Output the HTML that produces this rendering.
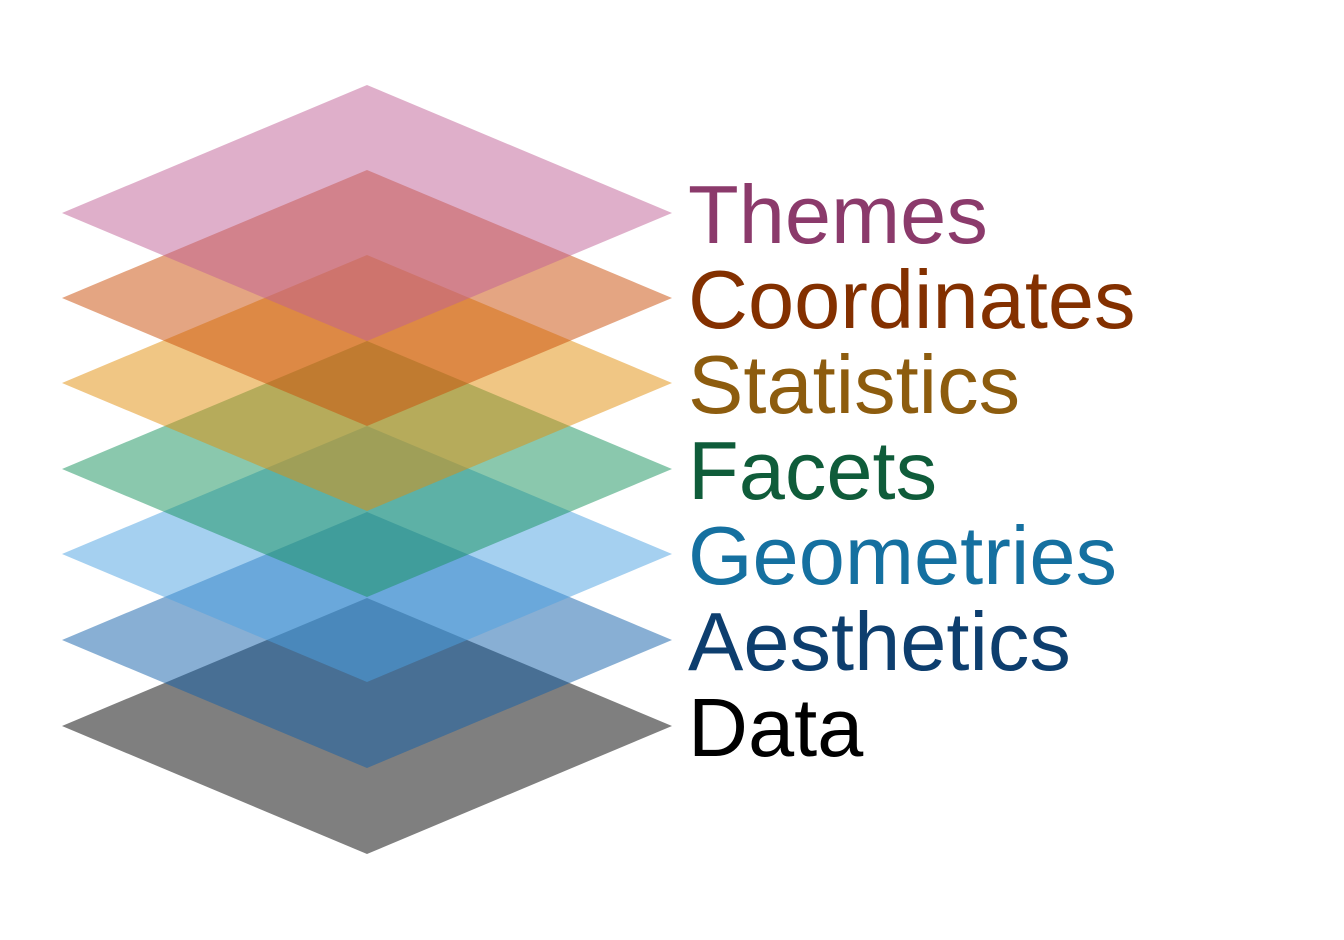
<!DOCTYPE html>
<html><head><meta charset="utf-8"><style>
html,body{margin:0;padding:0;background:#fff;}
svg{display:block;}
text{font-family:"Liberation Sans",Arial,sans-serif;font-size:83px;}
</style></head><body>
<svg width="1344" height="940" viewBox="0 0 1344 940" xmlns="http://www.w3.org/2000/svg">
<g fill-opacity="0.5">
<polygon points="62,726 367,598 672,726 367,854" fill="#000000"/>
<polygon points="62,640 367,512 672,640 367,768" fill="#115fa9"/>
<polygon points="62,554 367,426 672,554 367,682" fill="#4ba1e1"/>
<polygon points="62,469 367,341 672,469 367,597" fill="#15915b"/>
<polygon points="62,383 367,255 672,383 367,511" fill="#e18d09"/>
<polygon points="62,298 367,170 672,298 367,426" fill="#c94b05"/>
<polygon points="62,213 367,85 672,213 367,341" fill="#bf5f95"/>
</g>
<text x="688" y="243" fill="#8b3a6b">Themes</text>
<text x="688" y="328" fill="#833000">Coordinates</text>
<text x="688" y="413" fill="#8d5c0e">Statistics</text>
<text x="688" y="499" fill="#0f5c3a">Facets</text>
<text x="688" y="584" fill="#1570a0">Geometries</text>
<text x="688" y="670" fill="#0d3e6e">Aesthetics</text>
<text x="688" y="756" fill="#000000">Data</text>
</svg>
</body></html>
